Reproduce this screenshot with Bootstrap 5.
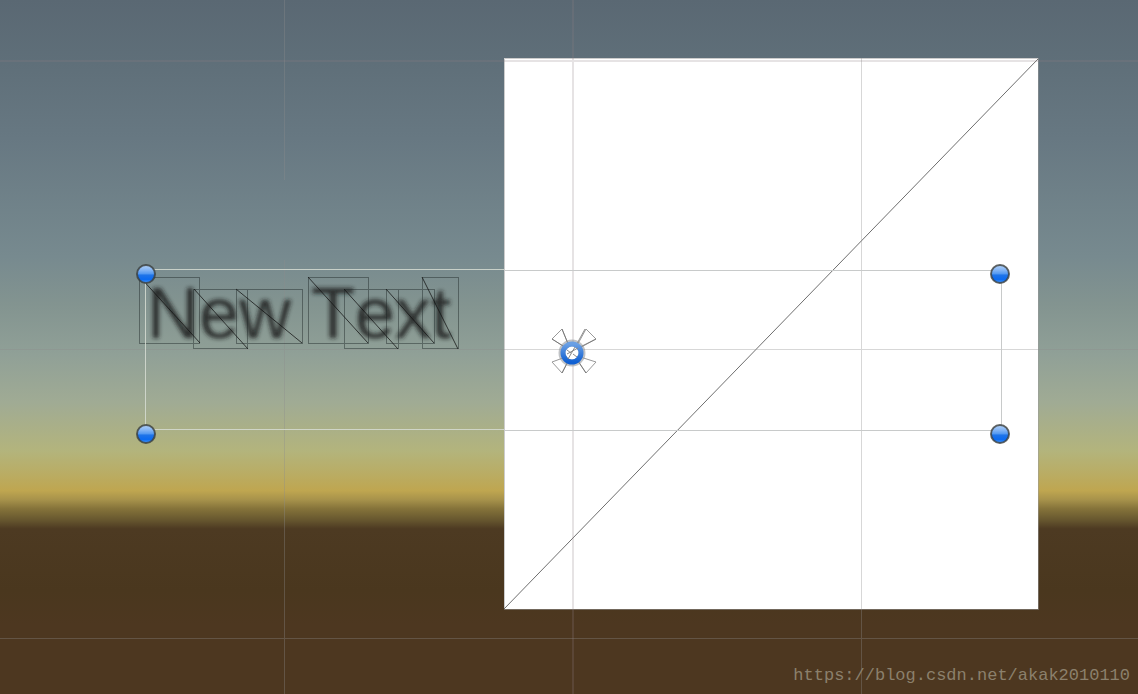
<!DOCTYPE html>
<html lang="en">
<head>
<meta charset="utf-8">
<meta name="viewport" content="width=device-width, initial-scale=1">
<title>Scene view</title>
<link href="https://cdn.jsdelivr.net/npm/bootstrap@5.3.0/dist/css/bootstrap.min.css" rel="stylesheet">
<style>
  .scene { background: #4d3720; }
  .scene-label { font: 72px "Liberation Sans", Arial, sans-serif; font-kerning: none; fill: #1c1f1f; filter: url(#soft); opacity: .85; }
  .glyph-mesh { fill: none; stroke: #1c2626; stroke-opacity: .45; shape-rendering: crispEdges; }
  .glyph-cut { stroke: #111; stroke-opacity: .75; fill: none; }
  .grid-lines { stroke: #8c8c8c; stroke-opacity: .35; shape-rendering: crispEdges; }
  .grid-faint { stroke: #8c8084; stroke-opacity: .22; stroke-width: 2; shape-rendering: crispEdges; }
  .rect-light { stroke: #d6dcd2; stroke-opacity: .85; fill: none; shape-rendering: crispEdges; }
  .rect-dark { stroke: #c8caca; fill: none; shape-rendering: crispEdges; }
  .source-link { font: 17px "Liberation Mono", "Courier New", monospace; color: #8b806c; }
</style>
</head>
<body>
<main class="scene position-relative vh-100 overflow-hidden d-flex justify-content-end align-items-end">
  <svg class="position-absolute top-0 start-0 w-100 h-100" viewBox="0 0 1138 694" preserveAspectRatio="xMidYMid slice" role="img" aria-label="Scene with a text element and an image element">
    <defs>
      <linearGradient id="sky" gradientUnits="userSpaceOnUse" x1="0" y1="0" x2="0" y2="694">
        <stop offset="0" stop-color="#5a6873"/>
        <stop offset=".09" stop-color="#5f6f79"/>
        <stop offset=".2" stop-color="#677882"/>
        <stop offset=".37" stop-color="#778a8f"/>
        <stop offset=".44" stop-color="#839490"/>
        <stop offset=".51" stop-color="#90a097"/>
        <stop offset=".58" stop-color="#a0ab94"/>
        <stop offset=".65" stop-color="#b3b47c"/>
        <stop offset=".68" stop-color="#b9ad66"/>
        <stop offset=".707" stop-color="#bfa650"/>
        <stop offset=".72" stop-color="#a7924b"/>
        <stop offset=".733" stop-color="#85733a"/>
        <stop offset=".75" stop-color="#65552e"/>
        <stop offset=".762" stop-color="#4d3a22"/>
        <stop offset=".85" stop-color="#4a371e"/>
        <stop offset=".9" stop-color="#4d3720"/>
        <stop offset="1" stop-color="#4d3720"/>
      </linearGradient>
      <linearGradient id="knob" x1="0" y1="0" x2="0" y2="1">
        <stop offset="0" stop-color="#b4d2f7"/>
        <stop offset=".3" stop-color="#7fb2f5"/>
        <stop offset=".48" stop-color="#549af2"/>
        <stop offset=".56" stop-color="#1f74e8"/>
        <stop offset=".8" stop-color="#0a6af0"/>
        <stop offset="1" stop-color="#4f9cfb"/>
      </linearGradient>
      <linearGradient id="ring" x1="0" y1="0" x2="0" y2="1">
        <stop offset="0" stop-color="#6ba0e4"/>
        <stop offset="1" stop-color="#0f5fd2"/>
      </linearGradient>
      <filter id="soft"><feGaussianBlur stdDeviation="2"/></filter>
      <g id="handle">
        <circle r="9" fill="url(#knob)" stroke="#3a3d3c" stroke-opacity=".8" stroke-width="2"/>
      </g>
    </defs>

    <!-- sky, horizon and ground -->
    <rect width="1138" height="694" fill="url(#sky)"/>
    <rect x="504" y="58" width="534" height="551" fill="#fff"/>
    <path d="M504.500 609V58.500H1038.500V609.500H504" fill="none" stroke="#999" stroke-opacity=".5"/>
    <path d="M504 609L1038 59" stroke="#555" stroke-opacity=".85"/>

    <!-- scene grid -->
    <path class="grid-lines" d="M284.500 260V694M861.500 58V694M0 349.500H1138M0 638.500H1138"/>
    <path class="grid-faint" d="M573 0V694M0 61H1138"/>
    <path class="grid-lines" stroke-dasharray="none" d="M284.500 0V180"/>

    <!-- text element -->
    <text class="scene-label" x="147" y="338">New Text</text>
    <path class="glyph-mesh" d="M139.500 277.500h60v66h-60zM193.500 289.500h54v59h-54zM236.500 289.500h66v54h-66zM308.500 277.500h60v66h-60zM344.500 289.500h54v59h-54zM386.500 289.500h48v54h-48zM422.500 277.500h36v71h-36z"/>
    <path class="glyph-cut" d="M140 277l60 66M194 289l54 60M236 289l66 54M308 277l60 66M344 289l54 60M386 289l48 54M422 277l36 72"/>

    <!-- selection rectangle -->
    <path class="rect-light" d="M504 269.500H145.500V429.500H504"/>
    <path class="rect-dark" d="M504 270.500H1001.500V430.500H504"/>
    <use href="#handle" x="146" y="274"/>
    <use href="#handle" x="1000" y="274"/>
    <use href="#handle" x="146" y="434"/>
    <use href="#handle" x="1000" y="434"/>

    <!-- anchor petals and pivot -->
    <g fill="#fff" stroke="#999" stroke-linejoin="round">
      <path d="M571 351L562 329L552 339ZM574 351L586 329L596 339ZM571 355L552 362L562 373ZM574 355L596 362L586 373Z"/>
    </g>
    <path d="M574 349L585 329M578 348L596 339M571 351L562 329M571 351L552 339M569 360L562 373M576 358L586 373" stroke="#666" stroke-opacity=".7"/>
    <circle cx="572" cy="353" r="10" fill="#fff" stroke="#8c9096" stroke-width="7" stroke-opacity=".55"/>
    <circle cx="572" cy="353" r="9" fill="none" stroke="url(#ring)" stroke-width="5"/>
    <path d="M567 354L578 348M568 359L575 347M567 350L571 353M573 354L577 357" stroke="#888"/>
  </svg>
  <a class="source-link position-relative text-decoration-none lh-sm pe-2 pb-2" href="https://blog.csdn.net/akak2010110">https://blog.csdn.net/akak2010110</a>
</main>
<script src="https://cdn.jsdelivr.net/npm/bootstrap@5.3.0/dist/js/bootstrap.bundle.min.js"></script>
</body>
</html>
